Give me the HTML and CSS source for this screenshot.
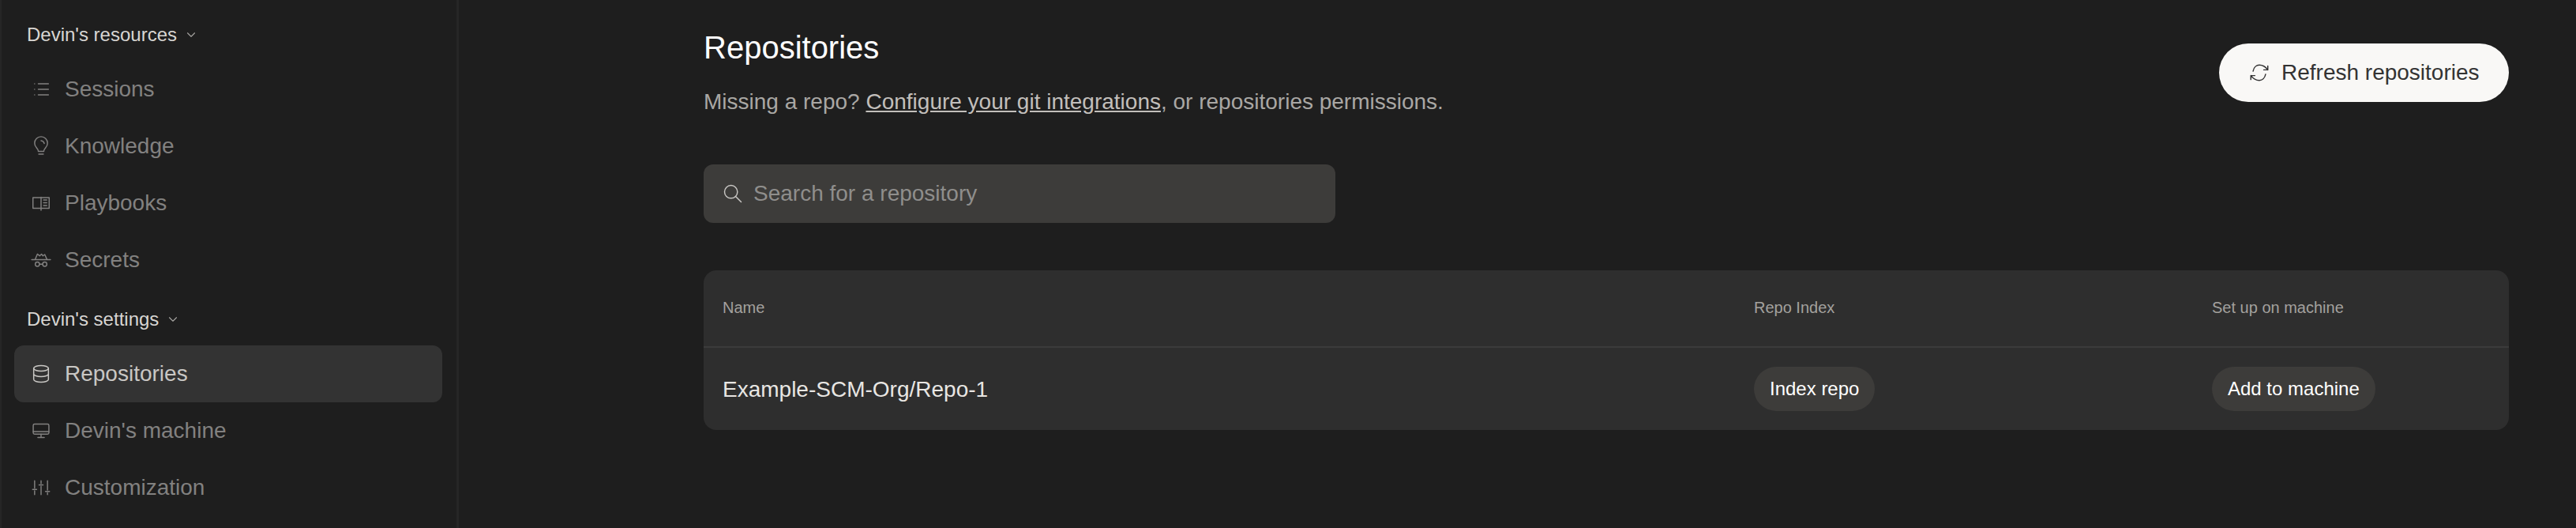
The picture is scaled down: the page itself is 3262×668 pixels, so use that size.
FILE: index.html
```html
<!DOCTYPE html>
<html lang="en">

<head>
  <meta charset="UTF-8">
  <title>Repositories</title>
  <link rel="stylesheet" href="styles.css">
</head>

<body>
  <aside class="sidebar">
    <div class="section-title section-first">Devin's resources
      <svg class="chevron" viewBox="0 0 24 24"><path d="M6 9l6 6 6-6" /></svg>
    </div>
    <a class="nav-item">
      <svg class="icon" viewBox="0 0 24 24"><path d="M9 6h11M9 12h11M9 18h11M5 6v.01M5 12v.01M5 18v.01" /></svg>
      Sessions
    </a>
    <a class="nav-item">
      <svg class="icon" viewBox="0 0 24 24"><path d="M9 17.500c0-1.900-.9-2.800-2-4a7 7 0 1 1 10 0c-1.100 1.200-2 2.100-2 4zM9.500 20.500h5M12 6a4 4 0 0 1 3.500 3" /></svg>
      Knowledge
    </a>
    <a class="nav-item">
      <svg class="icon" viewBox="0 0 24 24"><path d="M12 6H3.200v11.500H12M12 6h8.800v11.500H12M12 5.500v14.200M14.700 8.500h3.500M14.700 11.500h3.500M14.700 14.500h3.500" /></svg>
      Playbooks
    </a>
    <a class="nav-item">
      <svg class="icon" viewBox="0 0 24 24"><path d="M1.800 11.500h20.400M5.500 11.500L8 5.500l2.500 2L12.500 5.500l1.500 2 2-1.500 2.500 5.500M10.300 16.500h3.400" /><circle cx="8" cy="16.500" r="2.300" /><circle cx="16" cy="16.500" r="2.300" /></svg>
      Secrets
    </a>
    <div class="section-title">Devin's settings
      <svg class="chevron" viewBox="0 0 24 24"><path d="M6 9l6 6 6-6" /></svg>
    </div>
    <a class="nav-item active">
      <svg class="icon" viewBox="0 0 24 24"><ellipse cx="12" cy="6" rx="8" ry="3" /><path d="M4 6v6a8 3 0 0 0 16 0V6M4 12v6a8 3 0 0 0 16 0v-6" /></svg>
      Repositories
    </a>
    <a class="nav-item">
      <svg class="icon" viewBox="0 0 24 24"><rect x="3.500" y="4.700" width="17" height="11" rx="1.500" /><path d="M3.500 12.800h17M12 15.700v3.300M8.500 19.200h7" /></svg>
      Devin's machine
    </a>
    <a class="nav-item">
      <svg class="icon" viewBox="0 0 24 24"><path d="M5 4.500v8M5 15.500v4M2.800 14h4.400M12 4.500v3M12 10.500v9M9.800 9h4.400M19 4.500v10M19 17.500v2M16.800 16h4.400" /></svg>
      Customization
    </a>
  </aside>

  <main class="content">
    <div class="page-header">
      <div>
        <h1>Repositories</h1>
        <p class="subtitle">Missing a repo? <a href="#">Configure your git integrations</a>, or repositories permissions.</p>
      </div>
      <button class="refresh-btn">
        <svg class="icon" viewBox="0 0 24 24"><path d="M5.200 10.300C6 6 9 3.700 12 3.700c4 0 7 2.300 9.200 5.200M21.200 4.600v4.300h-4.400M18.800 13.700C18 18 15 20.300 12 20.300c-4 0-7-2.300-9.200-5.200M2.800 19.400v-4.300h4.400" /></svg>
        Refresh repositories
      </button>
    </div>

    <div class="search">
      <svg class="icon" viewBox="0 0 24 24"><circle cx="10" cy="10" r="7" /><path d="M21 21l-6-6" /></svg>
      <input type="text" class="search-bar" placeholder="Search for a repository">
    </div>

    <div class="table-card">
      <table>
        <thead>
          <tr>
            <th class="col-name">Name</th>
            <th class="col-index">Repo Index</th>
            <th>Set up on machine</th>
          </tr>
        </thead>
        <tbody>
          <tr>
            <td class="repo-name">Example-SCM-Org/Repo-1</td>
            <td><button class="pill">Index repo</button></td>
            <td><button class="pill">Add to machine</button></td>
          </tr>
        </tbody>
      </table>
    </div>
  </main>
</body>

</html>
```

FILE: styles.css
```css
* {
  box-sizing: border-box;
}

body {
  display: flex;
  height: 100vh;
  margin: 0;
  overflow: hidden;
  background: #1e1e1e;
  font-family: "Liberation Sans", Arial, sans-serif;
}

svg {
  fill: none;
  stroke: currentColor;
  stroke-linecap: round;
  stroke-linejoin: round;
}

.icon {
  width: 28px;
  height: 28px;
  flex-shrink: 0;
  stroke-width: 1.25;
}

.sidebar {
  width: 581px;
  flex-shrink: 0;
  padding: 0 18px;
  border-left: 2px solid #262626;
  border-right: 3px solid #262626;
}

.section-title {
  display: flex;
  align-items: center;
  gap: 9px;
  height: 36px;
  margin: 21px 0 15px 14px;
  font-size: 24px;
  color: #d8d6d3;
}

.section-first {
  margin-top: 26px;
}

.chevron {
  width: 18px;
  height: 18px;
  stroke-width: 1.5;
  color: #a5a3a0;
}

.nav-item {
  display: flex;
  align-items: center;
  gap: 16px;
  height: 72px;
  padding-left: 20px;
  margin-left: -2px;
  border-radius: 12px;
  font-size: 28px;
  color: #828180;
}

.nav-item.active {
  background: #333333;
  color: #c9c7c4;
}

.content {
  flex: 1;
  min-width: 0;
  padding: 36px 85px 0 310px;
}

.page-header {
  display: flex;
  justify-content: space-between;
  align-items: flex-start;
}

h1 {
  margin: 0;
  font-size: 40px;
  line-height: 48px;
  font-weight: 400;
  color: #ffffff;
}

.subtitle {
  margin: 24px 0 0;
  font-size: 28px;
  line-height: 42px;
  color: #a9a7a4;
}

.subtitle a {
  color: #c2bfbb;
}

.refresh-btn {
  display: flex;
  align-items: center;
  gap: 14px;
  width: 367px;
  height: 74px;
  margin-top: 19px;
  padding: 0 37px;
  border: none;
  border-radius: 37px;
  background: #f9f8f6;
  color: #333333;
  font-family: inherit;
  font-size: 28px;
  white-space: nowrap;
}

.search {
  display: flex;
  align-items: center;
  gap: 12px;
  width: 800px;
  height: 74px;
  margin-top: 58px;
  padding: 0 23px;
  border-radius: 12px;
  background: #3d3c3a;
  color: #c9c7c4;
}

input.search-bar {
  flex: 1;
  min-width: 0;
  border: none;
  outline: none;
  padding: 0;
  background: transparent;
  color: white;
  font-family: inherit;
  font-size: 28px;
}

input.search-bar::placeholder {
  color: #8f8e8c;
  opacity: 1;
}

.table-card {
  margin-top: 60px;
  border-radius: 16px;
  background: #2e2e2e;
  overflow: hidden;
}

table {
  width: 100%;
  border-collapse: collapse;
  table-layout: fixed;
}

th {
  height: 97px;
  padding: 0 24px 2px;
  border-bottom: 2px solid #3b3b3b;
  text-align: left;
  font-size: 20px;
  font-weight: 400;
  color: #a3a19e;
}

.col-name {
  width: 1306px;
}

.col-index {
  width: 580px;
}

td {
  height: 105px;
  padding: 0 24px;
}

.repo-name {
  padding-top: 2px;
  font-size: 28px;
  color: #e8e6e3;
}

.pill {
  height: 56px;
  padding: 0 20px;
  border: none;
  border-radius: 28px;
  background: #3d3c3a;
  color: #ffffff;
  font-family: inherit;
  font-size: 24px;
}
```
